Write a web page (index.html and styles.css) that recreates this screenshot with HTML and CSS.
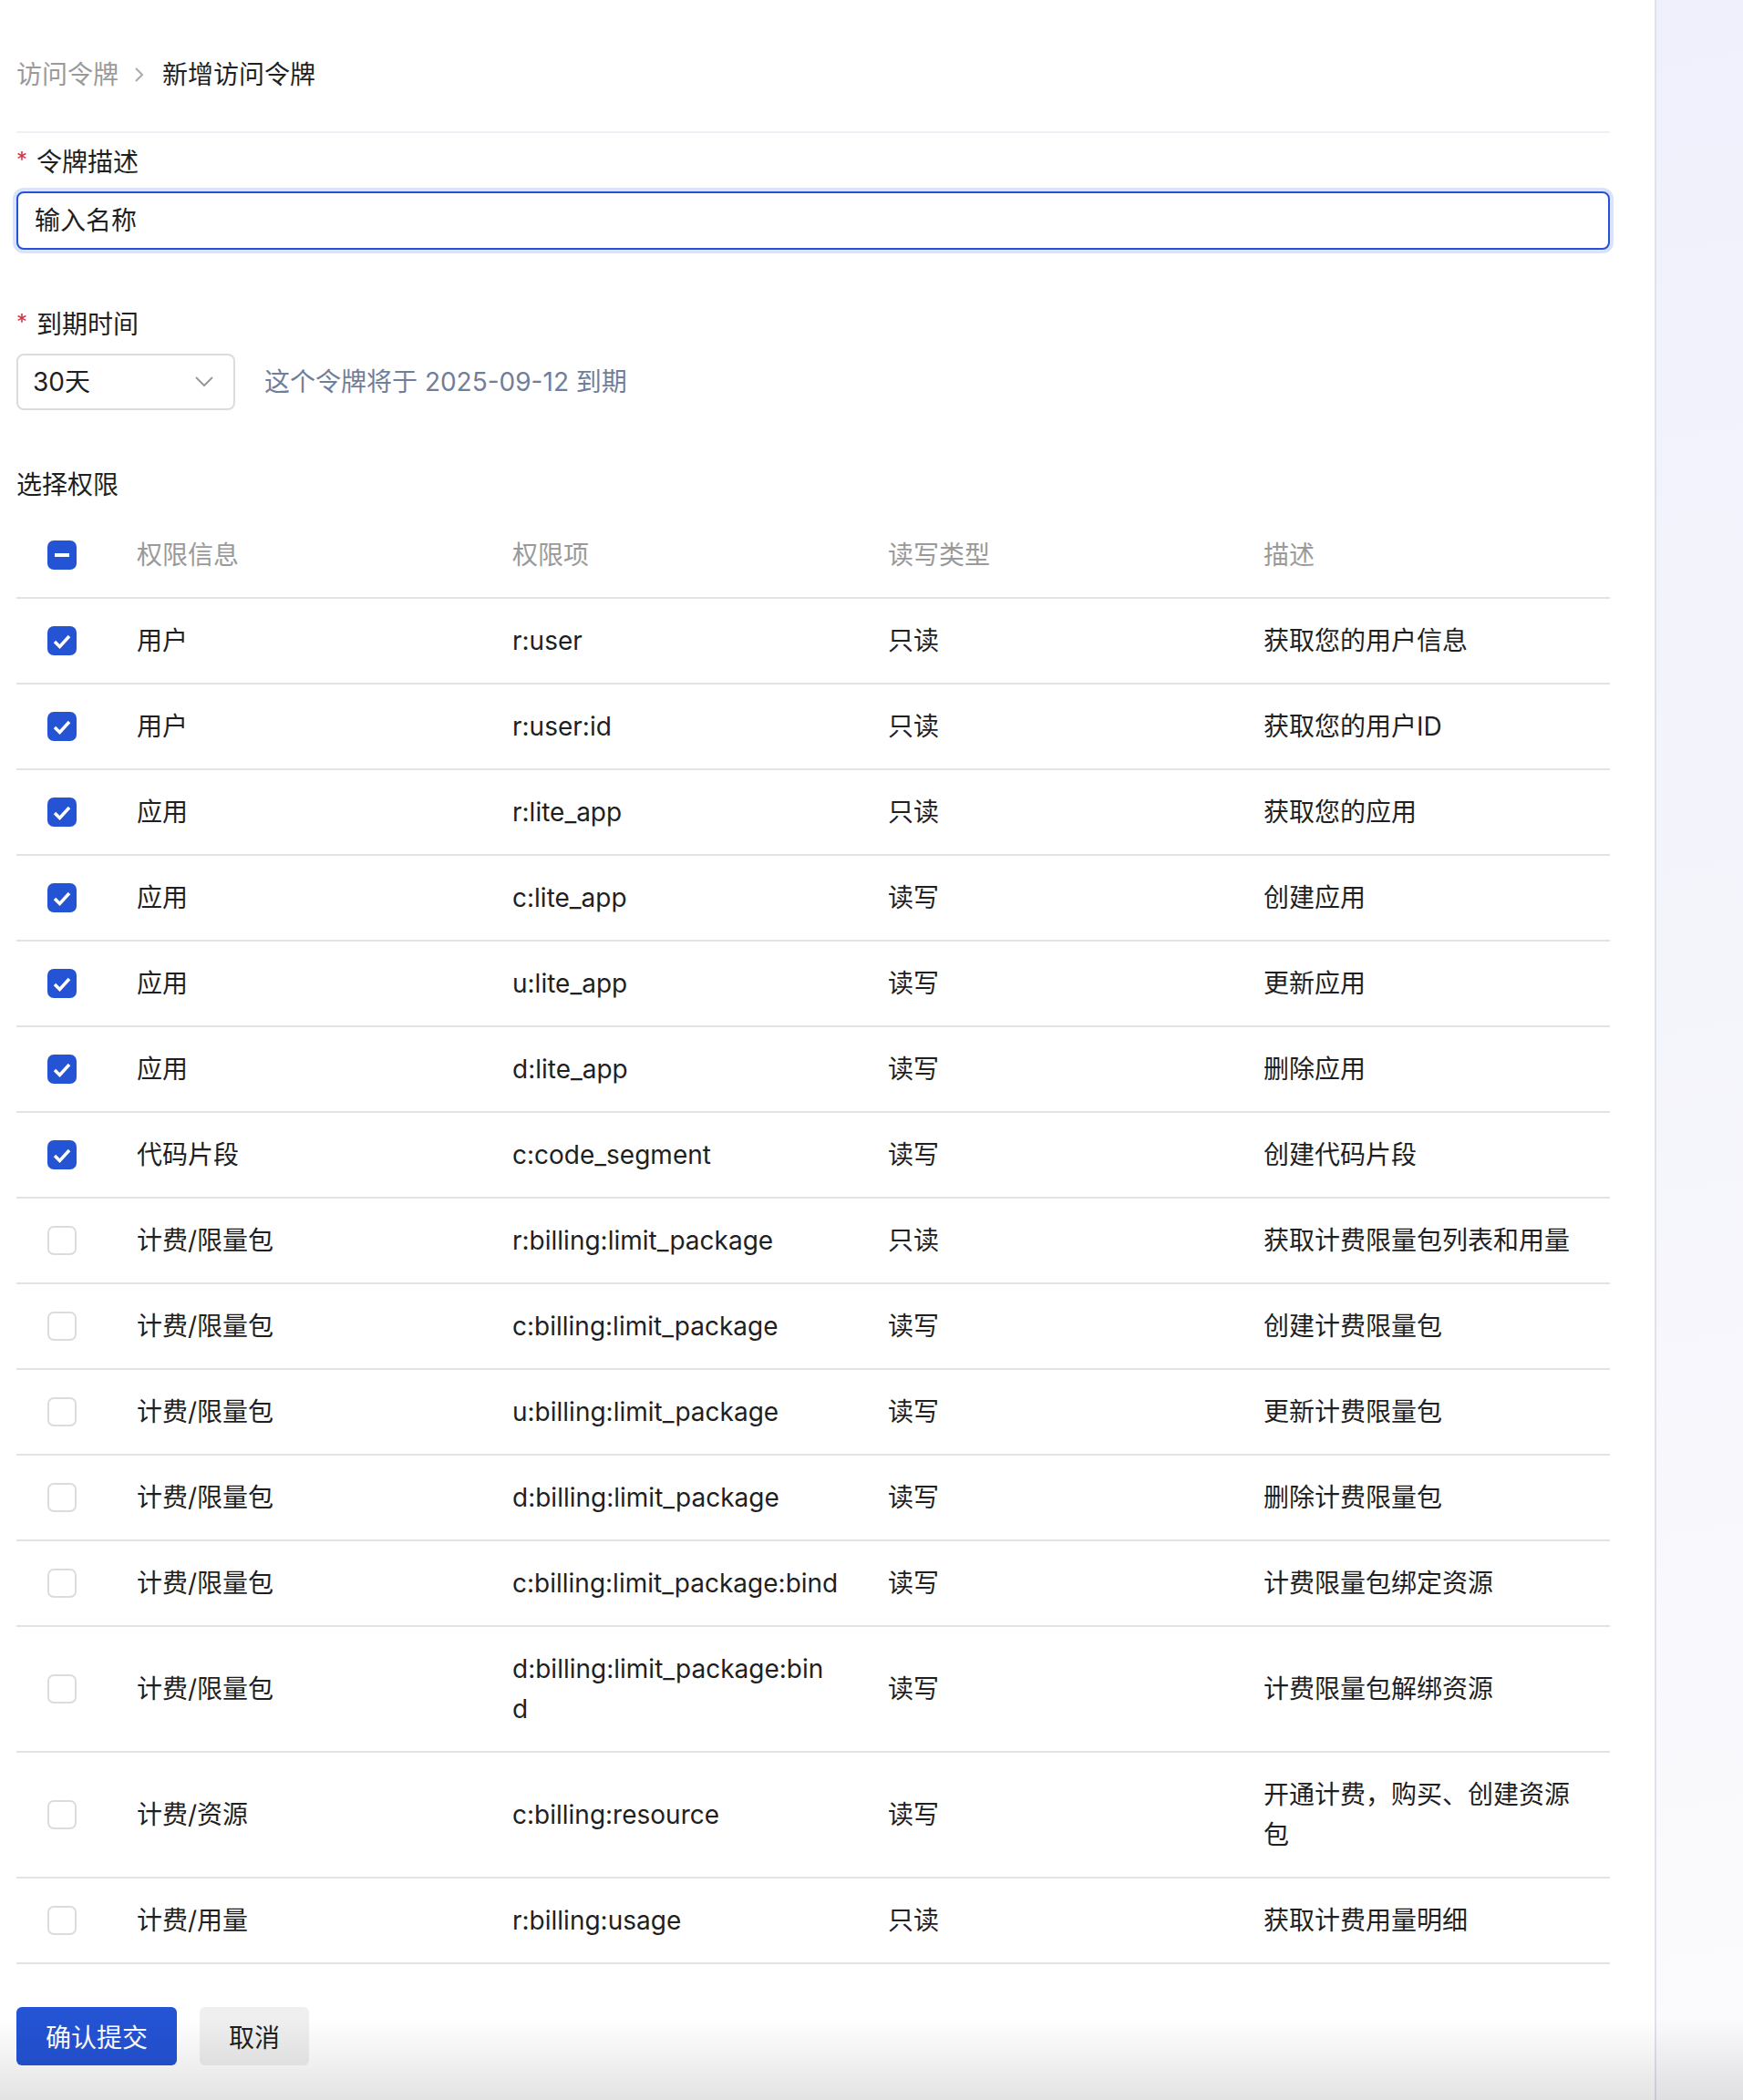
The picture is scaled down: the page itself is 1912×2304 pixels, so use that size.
FILE: index.html
```
<!DOCTYPE html>
<html lang="zh-CN">
<head>
    <meta charset="UTF-8">
    <meta name="viewport" content="width=device-width, initial-scale=1.0">
    <title>新增访问令牌</title>
    <link rel="stylesheet" href="styles.css">
</head>
<body>
    <div class="layout">
        <main class="content">
            <div class="breadcrumb">
                <span class="crumb-link">访问令牌</span>
                <svg class="crumb-sep" width="12" height="18" viewBox="0 0 12 18"><polyline points="2,2 9,9 2,16" fill="none" stroke="#aaa" stroke-width="2"/></svg>
                <span class="crumb-current">新增访问令牌</span>
            </div>

            <div class="form-item">
                <div class="form-label"><span class="required">*</span>令牌描述</div>
                <input class="text-input" type="text" placeholder="输入名称">
            </div>

            <div class="form-item">
                <div class="form-label"><span class="required">*</span>到期时间</div>
                <div class="expire-row">
                    <div class="select-box">
                        <span>30天</span>
                        <svg width="20" height="12" viewBox="0 0 20 12"><polyline points="1,1 10,10 19,1" fill="none" stroke="#999" stroke-width="2"/></svg>
                    </div>
                    <span class="expire-hint">这个令牌将于 2025-09-12 到期</span>
                </div>
            </div>

            <div class="section-title">选择权限</div>
            <table class="perm-table">
                <colgroup>
                    <col class="col-check">
                    <col class="col-info">
                    <col class="col-key">
                    <col class="col-type">
                    <col class="col-desc">
                </colgroup>
                <thead>
                    <tr>
                        <th><span class="check checked"><svg width="32" height="32" viewBox="0 0 32 32"><rect x="8" y="14" width="16" height="4" fill="#fff"/></svg></span></th>
                        <th>权限信息</th>
                        <th>权限项</th>
                        <th>读写类型</th>
                        <th>描述</th>
                    </tr>
                </thead>
                <tbody>
                    <tr>
                        <td><span class="check checked"><svg width="32" height="32" viewBox="0 0 32 32"><polyline points="8,17 13.5,22.5 24,11" fill="none" stroke="#fff" stroke-width="3.5"/></svg></span></td>
                        <td>用户</td><td>r:user</td><td>只读</td><td>获取您的用户信息</td>
                    </tr>
                    <tr>
                        <td><span class="check checked"><svg width="32" height="32" viewBox="0 0 32 32"><polyline points="8,17 13.5,22.5 24,11" fill="none" stroke="#fff" stroke-width="3.5"/></svg></span></td>
                        <td>用户</td><td>r:user:id</td><td>只读</td><td>获取您的用户ID</td>
                    </tr>
                    <tr>
                        <td><span class="check checked"><svg width="32" height="32" viewBox="0 0 32 32"><polyline points="8,17 13.5,22.5 24,11" fill="none" stroke="#fff" stroke-width="3.5"/></svg></span></td>
                        <td>应用</td><td>r:lite_app</td><td>只读</td><td>获取您的应用</td>
                    </tr>
                    <tr>
                        <td><span class="check checked"><svg width="32" height="32" viewBox="0 0 32 32"><polyline points="8,17 13.5,22.5 24,11" fill="none" stroke="#fff" stroke-width="3.5"/></svg></span></td>
                        <td>应用</td><td>c:lite_app</td><td>读写</td><td>创建应用</td>
                    </tr>
                    <tr>
                        <td><span class="check checked"><svg width="32" height="32" viewBox="0 0 32 32"><polyline points="8,17 13.5,22.5 24,11" fill="none" stroke="#fff" stroke-width="3.5"/></svg></span></td>
                        <td>应用</td><td>u:lite_app</td><td>读写</td><td>更新应用</td>
                    </tr>
                    <tr>
                        <td><span class="check checked"><svg width="32" height="32" viewBox="0 0 32 32"><polyline points="8,17 13.5,22.5 24,11" fill="none" stroke="#fff" stroke-width="3.5"/></svg></span></td>
                        <td>应用</td><td>d:lite_app</td><td>读写</td><td>删除应用</td>
                    </tr>
                    <tr>
                        <td><span class="check checked"><svg width="32" height="32" viewBox="0 0 32 32"><polyline points="8,17 13.5,22.5 24,11" fill="none" stroke="#fff" stroke-width="3.5"/></svg></span></td>
                        <td>代码片段</td><td>c:code_segment</td><td>读写</td><td>创建代码片段</td>
                    </tr>
                    <tr>
                        <td><span class="check"></span></td>
                        <td>计费/限量包</td><td>r:billing:limit_package</td><td>只读</td><td>获取计费限量包列表和用量</td>
                    </tr>
                    <tr>
                        <td><span class="check"></span></td>
                        <td>计费/限量包</td><td>c:billing:limit_package</td><td>读写</td><td>创建计费限量包</td>
                    </tr>
                    <tr>
                        <td><span class="check"></span></td>
                        <td>计费/限量包</td><td>u:billing:limit_package</td><td>读写</td><td>更新计费限量包</td>
                    </tr>
                    <tr>
                        <td><span class="check"></span></td>
                        <td>计费/限量包</td><td>d:billing:limit_package</td><td>读写</td><td>删除计费限量包</td>
                    </tr>
                    <tr>
                        <td><span class="check"></span></td>
                        <td>计费/限量包</td><td>c:billing:limit_package:bind</td><td>读写</td><td>计费限量包绑定资源</td>
                    </tr>
                    <tr>
                        <td><span class="check"></span></td>
                        <td>计费/限量包</td><td>d:billing:limit_package:bind</td><td>读写</td><td>计费限量包解绑资源</td>
                    </tr>
                    <tr>
                        <td><span class="check"></span></td>
                        <td>计费/资源</td><td>c:billing:resource</td><td>读写</td><td>开通计费，购买、创建资源包</td>
                    </tr>
                    <tr>
                        <td><span class="check"></span></td>
                        <td>计费/用量</td><td>r:billing:usage</td><td>只读</td><td>获取计费用量明细</td>
                    </tr>
                </tbody>
            </table>

            <div class="actions">
                <button class="btn btn-primary">确认提交</button>
                <button class="btn btn-default">取消</button>
            </div>
        </main>
        <aside class="side"></aside>
    </div>
    <div class="bottom-fade"></div>
</body>
</html>
```

FILE: styles.css
```
body {
    margin: 0;
    padding: 0;
    font-family: Inter, "Noto Sans CJK SC", sans-serif;
    font-size: 28px;
    line-height: 44px;
    color: #1f1f1f;
    background: #fff;
}
.layout {
    display: flex;
    min-height: 100vh;
}
.content {
    width: 1748px;
    padding: 60px 49px 40px 18px;
}
.side {
    flex: 1;
    border-left: 2px solid #dfe3ee;
    background: linear-gradient(170deg, #eff0fb 0%, #f6f6fc 60%, #fbfbfd 100%);
}

/* 面包屑 */
.breadcrumb {
    display: flex;
    align-items: center;
    padding-bottom: 40px;
    border-bottom: 2px solid #eff0f5;
}
.crumb-link {
    color: #9a9a9a;
}
.crumb-sep {
    margin: 0 19px 0 17px;
}
.crumb-current {
    color: #1f1f1f;
}

/* 表单 */
.form-item {
    margin-top: 10px;
    margin-bottom: 60px;
}
.form-label {
    display: flex;
    align-items: center;
    margin-bottom: 10px;
}
.required {
    color: #d4373a;
    font-size: 24px;
    margin-right: 10px;
    margin-top: -4px;
}
.text-input {
    display: block;
    width: 100%;
    height: 64px;
    box-sizing: border-box;
    border: 2px solid #2453d4;
    border-radius: 8px;
    box-shadow: 0 0 0 4px #dbe2fb;
    padding: 0 18px;
    font-family: inherit;
    font-size: 28px;
    color: #1f1f1f;
    outline: none;
}
.text-input::placeholder {
    color: #1f1f1f;
}
.expire-row {
    display: flex;
    align-items: center;
    gap: 32px;
}
.select-box {
    display: flex;
    align-items: center;
    justify-content: space-between;
    width: 240px;
    height: 62px;
    box-sizing: border-box;
    border: 2px solid #dcdcdc;
    border-radius: 8px;
    padding: 0 22px 0 16px;
}
.expire-hint {
    color: #717e9a;
}
.section-title {
    margin-bottom: 9px;
}

/* 权限表格 */
.perm-table {
    width: 100%;
    table-layout: fixed;
    border-collapse: collapse;
}
.col-check { width: 116px; }
.col-info { width: 412px; }
.col-key { width: 412px; }
.col-type { width: 412px; }
.col-desc { width: 396px; }
.perm-table th,
.perm-table td {
    padding: 24px 16px;
    text-align: left;
    vertical-align: middle;
    border-bottom: 2px solid #e3e3e3;
    font-weight: normal;
}
.perm-table th {
    color: #9a9a9a;
}
.perm-table td:nth-child(3) {
    padding-right: 38.2px;
    word-break: break-all;
}
.perm-table td:last-child,
.perm-table th:last-child {
    padding-right: 24px;
}
.perm-table th:first-child,
.perm-table td:first-child {
    padding-left: 34px;
}
.check {
    display: block;
    width: 32px;
    height: 32px;
    box-sizing: border-box;
    border: 2px solid #dcdcdc;
    border-radius: 7px;
    background: #fff;
}
.check.checked {
    border: none;
    background: #2453d4;
}
.check svg {
    display: block;
}

/* 按钮 */
.actions {
    display: flex;
    gap: 25px;
    margin-top: 47px;
}
.btn {
    height: 64px;
    border: none;
    border-radius: 6px;
    font-family: inherit;
    font-size: 28px;
    padding: 0 32px;
}
.btn-primary {
    background: #2453d4;
    color: #fff;
}
.btn-default {
    background: #efefef;
    color: #1f1f1f;
}
.bottom-fade {
    position: fixed;
    left: 0;
    right: 0;
    bottom: 0;
    height: 90px;
    background: linear-gradient(to bottom, rgba(0, 0, 0, 0), rgba(0, 0, 0, 0.11));
    pointer-events: none;
}
```
